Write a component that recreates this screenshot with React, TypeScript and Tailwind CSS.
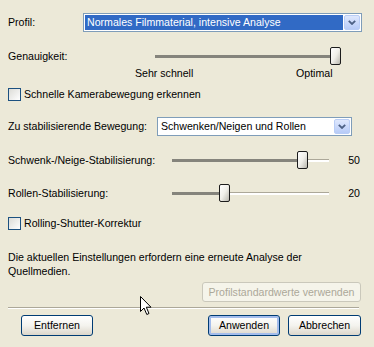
import React from "react";

function Combo({ text, selected, className }: { text: string; selected?: boolean; className: string }) {
  return (
    <div className={`h-[19px] border border-[#7f9db9] bg-white p-[1px] flex items-stretch ${className}`}>
      <div
        className={`flex-1 flex items-center pl-[2px] whitespace-nowrap ${
          selected ? "bg-[#316ac5] text-white" : "text-black"
        }`}
      >
        {text}
      </div>
      <div className="w-[16px] ml-[1px] rounded-[2px] border border-[#b9cdf6] bg-gradient-to-b from-[#dfe8fd] to-[#b7cbf7] flex items-center justify-center">
        <svg width="8" height="5" viewBox="0 0 8 5">
          <path d="M0.8 0.8 L4 4 L7.2 0.8" fill="none" stroke="#4d6185" strokeWidth="1.8" />
        </svg>
      </div>
    </div>
  );
}

function Slider({ thumb, className }: { thumb: number; className: string }) {
  return (
    <div className={`relative h-[20px] flex items-center ${className}`}>
      <div className="w-full flex items-start">
        <div className="h-[3px] bg-[#85847c]" style={{ width: thumb + 5 }} />
        <div className="flex-1 h-[3px] border-t border-[#aca899] bg-white" />
      </div>
      <div
        className="absolute top-[1px] w-[11px] h-[18px] rounded-[2px] border border-[#1c1c1c] bg-gradient-to-br from-white via-[#f0efe9] to-[#b9b7ae]"
        style={{ left: thumb }}
      />
    </div>
  );
}

function Check({ label }: { label: string }) {
  return (
    <div className="flex items-center h-[15px]">
      <div className="w-[13px] h-[13px] border border-[#1c5180] bg-gradient-to-br from-[#dcdcd7] to-white" />
      <span className="ml-[3px]">{label}</span>
    </div>
  );
}

function Button({ label, focused, className }: { label: string; focused?: boolean; className: string }) {
  return (
    <div
      className={`h-[21px] rounded-[3px] border border-[#003c74] bg-gradient-to-b from-white via-[#f4f3ee] to-[#dcd7cb] flex items-center justify-center ${
        focused ? "shadow-[inset_0_0_0_2px_#a4bdec]" : ""
      } ${className}`}
    >
      {label}
    </div>
  );
}

export default function App() {
  return (
    <div className="relative w-[374px] h-[347px] bg-[#ece9d8] px-[8px] text-[10.6px] leading-[13px] text-black font-['Liberation_Sans',Arial,sans-serif] overflow-hidden">
      <div className="flex items-center mt-[13px]">
        <span className="w-[75px]">Profil:</span>
        <Combo text="Normales Filmmaterial, intensive Analyse" selected className="w-[279px]" />
      </div>

      <div className="flex items-center mt-[14px]">
        <span className="w-[147px]">Genauigkeit:</span>
        <Slider thumb={175} className="w-[182px]" />
      </div>
      <div className="flex items-center h-[14px]">
        <span className="ml-[127px] w-[161px]">Sehr schnell</span>
        <span>Optimal</span>
      </div>

      <div className="mt-[7px]">
        <Check label="Schnelle Kamerabewegung erkennen" />
      </div>

      <div className="flex items-center mt-[15px]">
        <span className="w-[149px]">Zu stabilisierende Bewegung:</span>
        <Combo text="Schwenken/Neigen und Rollen" className="w-[195px]" />
      </div>

      <div className="flex items-center mt-[14px]">
        <span className="w-[164px]">Schwenk-/Neige-Stabilisierung:</span>
        <Slider thumb={125} className="w-[157px]" />
        <span className="w-[31px] text-right">50</span>
      </div>

      <div className="flex items-center mt-[13px]">
        <span className="w-[164px]">Rollen-Stabilisierung:</span>
        <Slider thumb={47} className="w-[157px]" />
        <span className="w-[31px] text-right">20</span>
      </div>

      <div className="mt-[13px]">
        <Check label="Rolling-Shutter-Korrektur" />
      </div>

      <p className="mt-[19px] leading-[14px]">
        Die aktuellen Einstellungen erfordern eine erneute Analyse der
        <br />
        Quellmedien.
      </p>

      <div className="flex justify-end mt-[4px] mr-[5px]">
        <div className="w-[159px] h-[20px] rounded-[3px] border border-[#cac8bb] bg-[#f5f4ea] text-[#aca899] flex items-center justify-center">
          Profilstandardwerte verwenden
        </div>
      </div>

      <div className="mt-[5px] w-[351px] h-[2px] border-t border-[#aca899] border-b border-b-white" />

      <div className="flex items-center justify-between mt-[6px] ml-[13px] mr-[5px]">
        <Button label="Entfernen" className="w-[72px]" />
        <div className="flex gap-[8px]">
          <Button label="Anwenden" focused className="w-[72px]" />
          <Button label="Abbrechen" className="w-[73px]" />
        </div>
      </div>

      <svg className="absolute left-[140px] top-[296px]" width="13" height="20" viewBox="0 0 13 20">
        <path
          d="M0.5 0.5 L0.5 15.5 L4 12 L6.8 18.5 L9 17.5 L6.3 11.2 L11 11.2 Z"
          fill="white"
          stroke="black"
          strokeWidth="1"
          strokeLinejoin="miter"
        />
      </svg>
    </div>
  );
}
